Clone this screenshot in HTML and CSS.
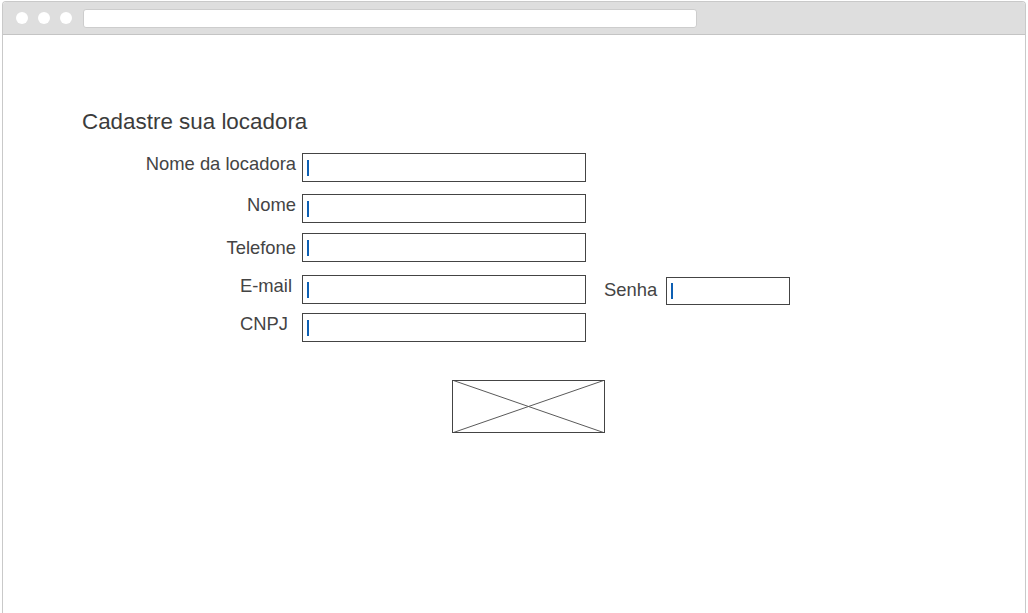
FILE: index.html
```html
<!DOCTYPE html>
<html lang="pt-BR">
<head>
<meta charset="utf-8">
<title>Cadastre sua locadora</title>
<link rel="stylesheet" href="styles.css">
</head>
<body>
<div class="window">
  <div class="chrome">
    <span class="dot"></span>
    <span class="dot"></span>
    <span class="dot"></span>
    <div class="address"></div>
  </div>
  <main class="page">
    <h1 class="title">Cadastre sua locadora</h1>
    <form class="form">
      <label class="label">Nome da locadora</label>
      <div class="field"><span class="caret"></span></div>

      <label class="label">Nome</label>
      <div class="field"><span class="caret"></span></div>

      <label class="label label-low">Telefone</label>
      <div class="field"><span class="caret"></span></div>

      <label class="label label-email">E-mail</label>
      <div class="field"><span class="caret"></span></div>
      <label class="label-senha">Senha</label>
      <div class="field field-small"><span class="caret"></span></div>

      <label class="label label-cnpj">CNPJ</label>
      <div class="field"><span class="caret"></span></div>
    </form>
    <div class="placeholder">
      <svg width="153" height="53" viewBox="0 0 153 53">
        <line x1="0" y1="0" x2="153" y2="53" class="cross"/>
        <line x1="0" y1="53" x2="153" y2="0" class="cross"/>
        <rect x="0.5" y="0.5" width="152" height="52" class="frame"/>
      </svg>
    </div>
  </main>
</div>
</body>
</html>
```
FILE: styles.css
```css
html, body {
  margin: 0;
  padding: 0;
  height: 100%;
  background: #ffffff;
  overflow: hidden;
}

body {
  font-family: "Liberation Sans", Arial, sans-serif;
  color: #444444;
}

.window {
  box-sizing: border-box;
  margin: 1px 2px 0 2px;
  height: calc(100% - 1px);
  border: 1px solid #c9c9c9;
  border-bottom: none;
  border-radius: 4px 4px 0 0;
  overflow: hidden;
}

.chrome {
  display: flex;
  align-items: center;
  height: 32px;
  background: #dedede;
  border-bottom: 1px solid #c4c4c4;
  padding-left: 13px;
  box-sizing: content-box;
}

.dot {
  width: 12px;
  height: 12px;
  border-radius: 50%;
  background: #ffffff;
  margin-right: 10px;
  flex: none;
}

.address {
  margin-left: 1px;
  width: 612px;
  height: 17px;
  background: #ffffff;
  border: 1px solid #cdcdcd;
  border-radius: 3px;
  margin-top: 1px;
}

.page {
  padding: 74px 0 0 79px;
}

.title {
  margin: 0;
  font-size: 22.4px;
  font-weight: normal;
  line-height: 25px;
  color: #3c3c3c;
}

.form {
  display: grid;
  grid-template-columns: 214px 284px max-content 124px;
  grid-template-rows: 41px 39px 42px 38px 29px;
  justify-content: start;
  column-gap: 6px;
  align-items: start;
  margin-top: 19px;
}

.label {
  grid-column: 1;
  text-align: right;
  font-size: 18.4px;
  line-height: 21px;
  white-space: nowrap;
}

.label-low {
  padding-top: 4px;
}

.label-email {
  padding-right: 4px;
}

.label-cnpj {
  padding-right: 8px;
}

.label-senha {
  font-size: 18.4px;
  line-height: 21px;
  padding-top: 4px;
  margin-left: 12px;
  margin-right: 3px;
}

.field {
  box-sizing: border-box;
  height: 29px;
  border: 1px solid #444444;
  background: #ffffff;
  padding: 6px 0 0 4px;
}

.field-small {
  height: 28px;
  margin-top: 2px;
  padding-top: 5px;
}

.caret {
  display: block;
  width: 2px;
  height: 16px;
  background: #0d5fb3;
}

.placeholder {
  margin: 38px 0 0 370px;
  width: 153px;
  height: 53px;
}

.placeholder svg {
  display: block;
}

.cross {
  stroke: #5a5a5a;
  stroke-width: 1;
}

.frame {
  fill: none;
  stroke: #444444;
  stroke-width: 1;
}
```
